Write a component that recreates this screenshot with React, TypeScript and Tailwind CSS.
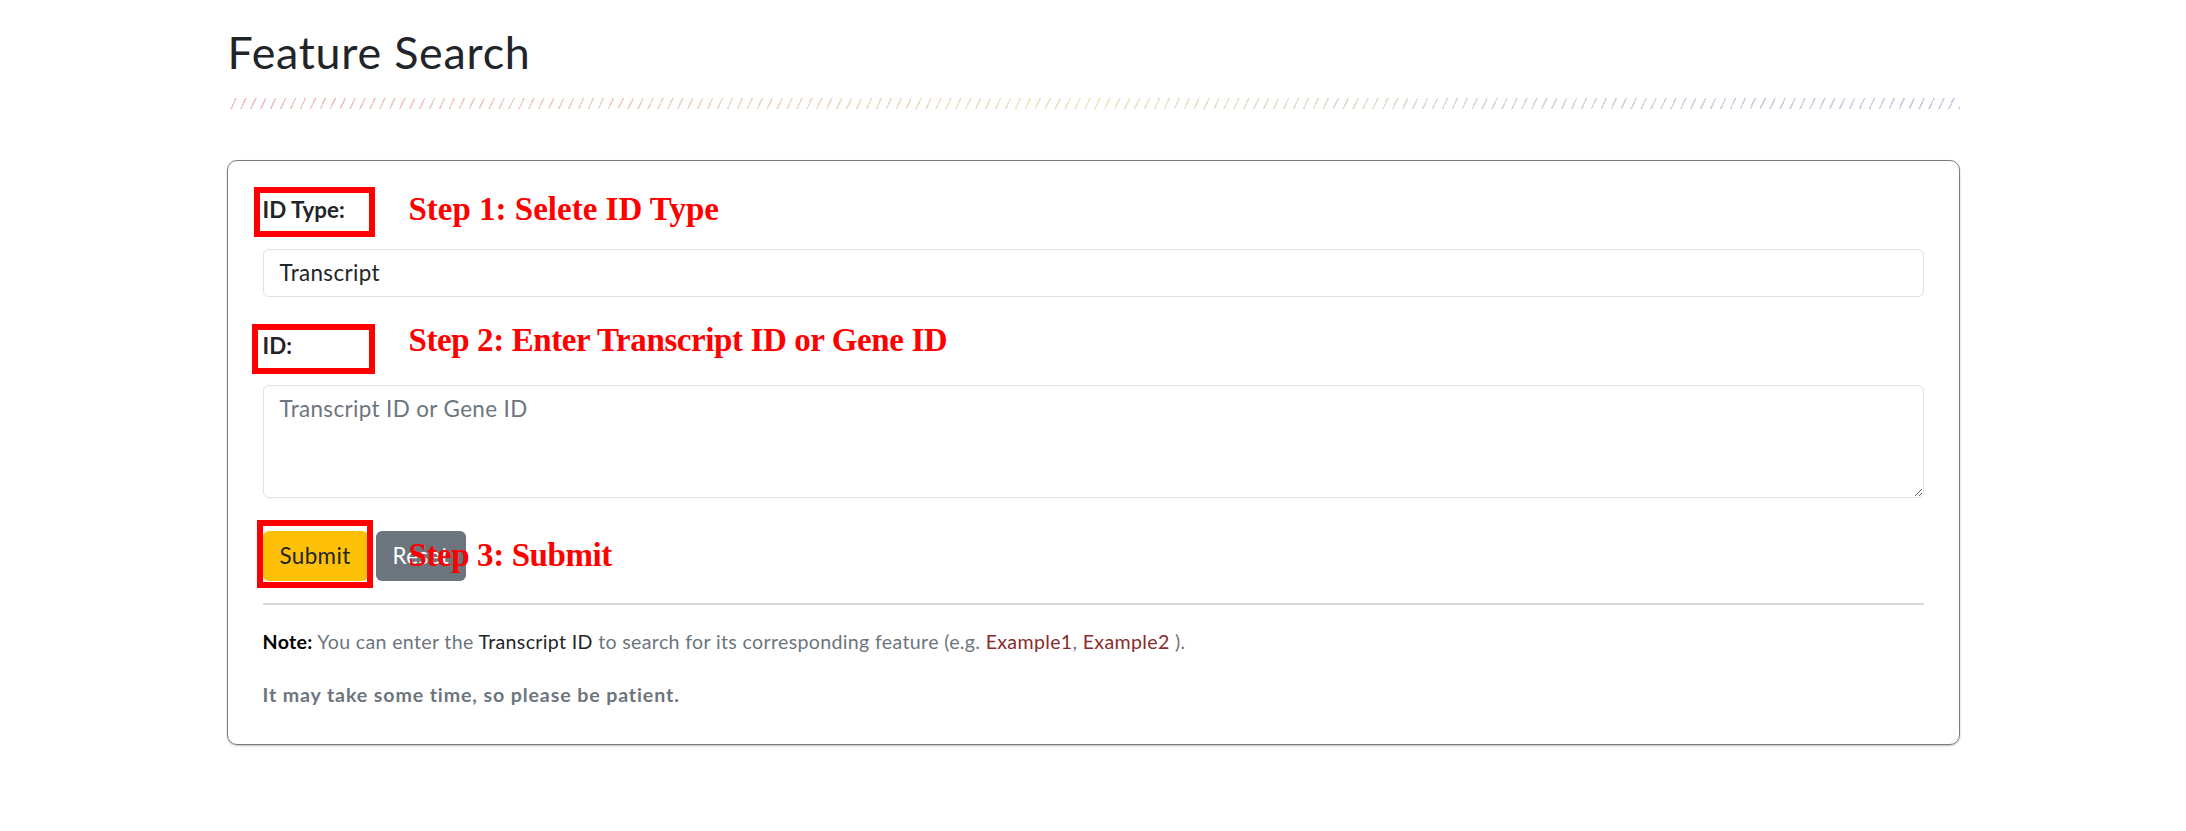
export default function App() {
  return (
    <div className="min-h-screen bg-white font-['Lato',sans-serif] text-[#212529]">
      <div className="mx-auto w-[1733px] pt-[26px]">
        {/* Header */}
        <h2 className="pl-[1px] text-[44.8px] leading-[53px] font-normal tracking-[0.017em]">Feature Search</h2>
        <div className="mt-[19px] h-[11px] bg-[repeating-linear-gradient(115deg,#fff_0_7.4px,transparent_7.4px_9px),linear-gradient(90deg,#efc3c6,#efe5c5_50%,#c8cbec)]" />

        {/* Search card */}
        <div className="mt-[51px] rounded-[10px] border border-[#7b7b7b] px-[35px] pt-[32px] pb-[34px] shadow-[0_1px_2px_rgba(0,0,0,0.25)]">
          <div className="relative h-[34px] text-[22.4px] leading-[34px] font-bold">
            ID Type:
            <span className="absolute left-[-9px] top-[-6px] h-[50px] w-[121px] border-[6px] border-[#f00]" />
            <span className="absolute left-[146px] top-0 whitespace-nowrap font-['Liberation_Serif',serif] text-[33px] leading-[33px] font-bold text-[#f00]">
              Step 1: Selete ID Type
            </span>
          </div>
          <div className="mt-[22px] flex h-[48px] items-center rounded-[6px] border border-[#dee2e6] px-[16px] text-[22.4px] tracking-[0.017em]">
            Transcript
          </div>

          <div className="relative mt-[32px] h-[34px] text-[22.4px] leading-[34px] font-bold">
            ID:
            <span className="absolute left-[-11px] top-[-5px] h-[50px] w-[123px] border-[6px] border-[#f00]" />
            <span className="absolute left-[146px] top-[-5px] whitespace-nowrap font-['Liberation_Serif',serif] text-[33px] leading-[33px] font-bold tracking-[-0.4px] text-[#f00]">
              Step 2: Enter Transcript ID or Gene ID
            </span>
          </div>
          <textarea
            placeholder="Transcript ID or Gene ID"
            className="mt-[22px] block h-[113px] w-full rounded-[6px] border border-[#dee2e6] px-[16px] py-[6px] text-[22.4px] leading-[33.6px] tracking-[0.017em] outline-none placeholder:text-[#6c757d]"
          />

          <div className="relative mt-[33px] flex gap-[8px]">
            <div className="relative">
              <button className="h-[50px] rounded-[6px] bg-[#ffc107] px-[17px] text-[22.4px] tracking-[0.017em] text-[#212529]">Submit</button>
              <span className="absolute left-[-6px] top-[-11px] h-[68px] w-[116px] border-[6px] border-[#f00]" />
            </div>
            <button className="h-[50px] rounded-[6px] bg-[#6c757d] px-[17px] text-[22.4px] tracking-[0.017em] text-white">Reset</button>
            <span className="absolute left-[146px] top-[8px] whitespace-nowrap font-['Liberation_Serif',serif] text-[33px] leading-[33px] font-bold tracking-[-0.4px] text-[#f00]">
              Step 3: Submit
            </span>
          </div>

          <div className="mt-[22px] h-[2px] bg-[#d9d9d9]" />

          <p className="mt-[22px] text-[19.6px] leading-[29.4px] tracking-[0.017em] text-[#6c757d]">
            <strong className="font-bold text-black">Note:</strong> You can enter the{" "}
            <span className="text-[#212529]">Transcript ID</span> to search for its corresponding feature (e.g.{" "}
            <a className="text-[#8a2b2b]">Example1</a>, <a className="text-[#8a2b2b]">Example2</a> ).
          </p>
          <p className="mt-[24px] text-[19.6px] leading-[29.4px] font-bold tracking-[0.045em] text-[#6c757d]">
            It may take some time, so please be patient.
          </p>
        </div>
      </div>
    </div>
  );
}
